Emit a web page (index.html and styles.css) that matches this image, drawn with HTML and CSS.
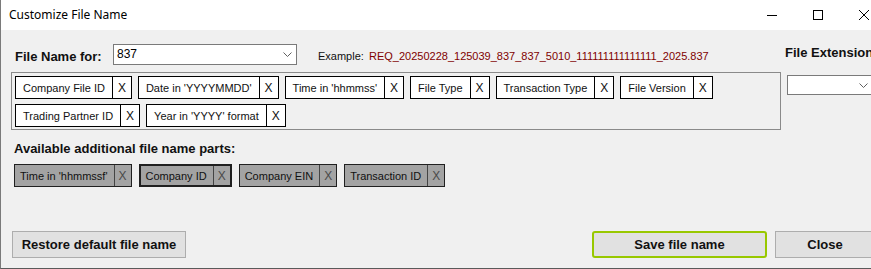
FILE: index.html
```html
<!DOCTYPE html>
<html lang="en">
<head>
    <meta charset="UTF-8">
    <title>Customize File Name</title>
    <link rel="stylesheet" href="styles.css">
</head>
<body>
    <div class="window">
        <div class="title-bar">
            <span class="title">Customize File Name</span>
            <div class="controls">
                <span class="ctl">
                    <svg width="10" height="10" viewBox="0 0 10 10"><line x1="0" y1="5.5" x2="10" y2="5.5" stroke="#000" stroke-width="1"/></svg>
                </span>
                <span class="ctl">
                    <svg width="10" height="10" viewBox="0 0 10 10"><rect x="0.5" y="0.5" width="9" height="9" fill="none" stroke="#000" stroke-width="1"/></svg>
                </span>
                <span class="ctl">
                    <svg width="10" height="10" viewBox="0 0 10 10"><path d="M0 0 L10 10 M10 0 L0 10" stroke="#000" stroke-width="1"/></svg>
                </span>
            </div>
        </div>

        <div class="content">
            <div class="main">
                <div class="header-row">
                    <span class="label">File Name for:</span>
                    <div class="combo name-combo">
                        <span class="combo-value">837</span>
                        <svg class="chevron" width="9" height="5" viewBox="0 0 9 5"><path d="M0.5 0.5 L4.5 4.5 L8.5 0.5" fill="none" stroke="#606060" stroke-width="1"/></svg>
                    </div>
                    <span class="example-label">Example:</span>
                    <span class="example-value">REQ_20250228_125039_837_837_5010_111111111111111_2025.837</span>
                </div>

                <div class="parts-box">
                    <div class="chip"><span class="chip-text">Company File ID</span><span class="chip-x">X</span></div>
                    <div class="chip"><span class="chip-text">Date in 'YYYYMMDD'</span><span class="chip-x">X</span></div>
                    <div class="chip"><span class="chip-text">Time in 'hhmmss'</span><span class="chip-x">X</span></div>
                    <div class="chip"><span class="chip-text">File Type</span><span class="chip-x">X</span></div>
                    <div class="chip"><span class="chip-text">Transaction Type</span><span class="chip-x">X</span></div>
                    <div class="chip"><span class="chip-text">File Version</span><span class="chip-x">X</span></div>
                    <div class="chip"><span class="chip-text">Trading Partner ID</span><span class="chip-x">X</span></div>
                    <div class="chip"><span class="chip-text">Year in 'YYYY' format</span><span class="chip-x">X</span></div>
                </div>

                <div class="label available-label">Available additional file name parts:</div>
                <div class="available-row">
                    <div class="chip gray"><span class="chip-text">Time in 'hhmmssf'</span><span class="chip-x">X</span></div>
                    <div class="chip gray selected"><span class="chip-text">Company ID</span><span class="chip-x">X</span></div>
                    <div class="chip gray"><span class="chip-text">Company EIN</span><span class="chip-x">X</span></div>
                    <div class="chip gray"><span class="chip-text">Transaction ID</span><span class="chip-x">X</span></div>
                </div>
            </div>

            <div class="side">
                <div class="label">File Extension</div>
                <div class="combo ext-combo">
                    <span class="combo-value"></span>
                    <svg class="chevron" width="9" height="5" viewBox="0 0 9 5"><path d="M0.5 0.5 L4.5 4.5 L8.5 0.5" fill="none" stroke="#606060" stroke-width="1"/></svg>
                </div>
            </div>
        </div>

        <div class="button-row">
            <button class="btn restore">Restore default file name</button>
            <button class="btn save">Save file name</button>
            <button class="btn close">Close</button>
        </div>
    </div>
</body>
</html>
```

FILE: styles.css
```css
* {
    margin: 0;
    padding: 0;
    box-sizing: border-box;
}

body {
    width: 871px;
    height: 269px;
    overflow: hidden;
    background: #f0f0f0;
    font-family: "Liberation Sans", Arial, sans-serif;
    color: #000;
}

.window {
    width: 871px;
    height: 269px;
    border-left: 1px solid #7a7a7a;
    border-bottom: 1px solid #5a5a5a;
    background: #f0f0f0;
    overflow: hidden;
}

/* Заголовок вікна */
.title-bar {
    width: 887px;
    height: 30px;
    background: #fff;
    display: flex;
    align-items: center;
    justify-content: space-between;
    margin-left: -1px;
}

.title {
    font-family: "Noto Sans", "Liberation Sans", sans-serif;
    font-size: 12px;
    padding-left: 9px;
    padding-bottom: 1px;
}

.controls {
    display: flex;
}

.ctl {
    width: 46px;
    height: 30px;
    display: flex;
    align-items: center;
    justify-content: center;
}

.ctl svg {
    display: block;
}

/* Основна частина */
.content {
    display: flex;
    width: 900px;
    padding: 14px 0 0 10px;
}

.main {
    width: 770px;
}

.label {
    font-size: 13px;
    font-weight: 700;
    color: #111;
}

.header-row {
    display: flex;
    align-items: center;
    height: 21px;
    padding-left: 4px;
}

.header-row .label {
    margin-top: 4px;
    width: 98px;
}

.combo {
    background: #fff;
    border: 1px solid #7a7a7a;
    display: flex;
    align-items: center;
    justify-content: space-between;
    font-size: 12px;
}

.name-combo {
    width: 184px;
    height: 21px;
    padding: 0 4px 0 3px;
}

.combo-value {
    padding-bottom: 2px;
}

.chevron {
    display: block;
}

.example-label {
    font-size: 11px;
    color: #111;
    margin-left: 21px;
    margin-top: 2px;
    width: 51px;
}

.example-value {
    font-size: 11px;
    color: #800000;
    margin-top: 2px;
}

.parts-box {
    margin-top: 7px;
    height: 58px;
    border: 1px solid #8a8a8a;
    padding: 3px 3px 2px 3px;
    display: flex;
    flex-wrap: wrap;
    align-content: flex-start;
    column-gap: 6px;
    row-gap: 5px;
}

/* Частини імені */
.chip {
    display: flex;
    height: 23px;
    border: 1px solid #000;
    background: #fff;
    font-size: 11px;
    color: #111;
}

.chip-text {
    display: flex;
    align-items: center;
    padding: 0 7px;
}

.chip-x {
    display: flex;
    align-items: center;
    justify-content: center;
    width: 19px;
    border-left: 1px solid #000;
    font-size: 12px;
}

.available-label {
    margin-top: 11px;
    padding-left: 3px;
}

.available-row {
    display: flex;
    gap: 7px;
    margin-top: 8px;
    padding-left: 3px;
}

.chip.gray {
    background: #a3a3a3;
    border-color: #202020;
}

.chip.gray .chip-x {
    color: #4a4a4a;
    width: 17px;
    border-left-color: #444;
}

.chip.gray .chip-text {
    padding: 0 6px 0 5px;
}

.chip.selected {
    border-width: 2px;
}

.side {
    padding-left: 4px;
    padding-top: 1px;
}

.ext-combo {
    margin-top: 15px;
    margin-left: 2px;
    width: 100px;
    height: 20px;
    padding: 0 18px 0 3px;
}

/* Кнопки */
.button-row {
    display: flex;
    margin-top: 44px;
    padding-left: 11px;
    width: 900px;
}

.btn {
    height: 27px;
    background: #e1e1e1;
    border: 1px solid #adadad;
    font-family: "Liberation Sans", Arial, sans-serif;
    font-size: 13px;
    font-weight: 700;
    color: #111;
}

.restore {
    width: 174px;
}

.save {
    width: 175px;
    margin-left: 406px;
    border: 2px solid #98c800;
    border-radius: 3px;
}

.close {
    width: 100px;
    margin-left: 8px;
}
```
